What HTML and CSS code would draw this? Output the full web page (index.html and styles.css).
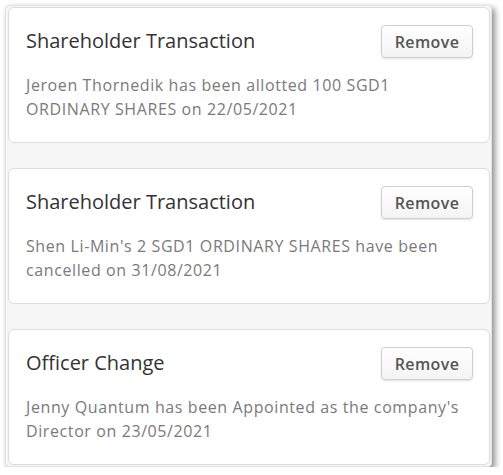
FILE: index.html
```html
<!DOCTYPE html>
<html>
<head>
<meta charset="utf-8">
<link rel="stylesheet" href="styles.css">
</head>
<body>
<div class="panel">
  <div class="card">
    <div class="head">
      <div class="title">Shareholder Transaction</div>
      <button class="btn">Remove</button>
    </div>
    <p class="desc">Jeroen Thornedik has been allotted 100 SGD1 ORDINARY SHARES on 22/05/2021</p>
  </div>
  <div class="card">
    <div class="head">
      <div class="title">Shareholder Transaction</div>
      <button class="btn">Remove</button>
    </div>
    <p class="desc">Shen Li-Min's 2 SGD1 ORDINARY SHARES have been cancelled on 31/08/2021</p>
  </div>
  <div class="card">
    <div class="head">
      <div class="title">Officer Change</div>
      <button class="btn">Remove</button>
    </div>
    <p class="desc">Jenny Quantum has been Appointed as the company's Director on 23/05/2021</p>
  </div>
</div>
</body>
</html>
```
FILE: styles.css
```css
html, body {
  margin: 0;
  padding: 0;
  background: #ffffff;
}
body {
  padding: 5px 0 0 5px;
  font-family: "Open Sans", Lato, sans-serif;
}
.panel {
  width: 487px;
  background: #f6f6f6;
  border: 1px solid #e2e2e2;
  border-radius: 4px;
  padding: 1px 1px 1px 2px;
  box-shadow: 3px 3px 6px rgba(0,0,0,0.45);
  display: flex;
  flex-direction: column;
  gap: 25px;
  box-sizing: border-box;
}
.card {
  background: #fff;
  border: 1px solid #dcdcdc;
  border-radius: 6px;
  height: 136px;
  box-sizing: border-box;
  padding: 17px 16px 0 17px;
}
.head {
  display: flex;
  justify-content: space-between;
  align-items: center;
}
.title {
  font-size: 20px;
  color: #333;
  margin-top: -2px;
}
.btn {
  width: 92px;
  height: 33px;
  font-family: inherit;
  font-size: 16px;
  font-weight: 600;
  letter-spacing: 0.4px;
  color: #555;
  background: linear-gradient(#ffffff, #f4f4f4);
  border: 1px solid #cfcfcf;
  border-radius: 4px;
  box-shadow: 0 1px 2px rgba(0,0,0,0.12);
  padding: 0;
}
.desc {
  margin: 15px 0 0;
  font-size: 16px;
  letter-spacing: 0.6px;
  line-height: 24px;
  color: #7a7a7a;
}
```
